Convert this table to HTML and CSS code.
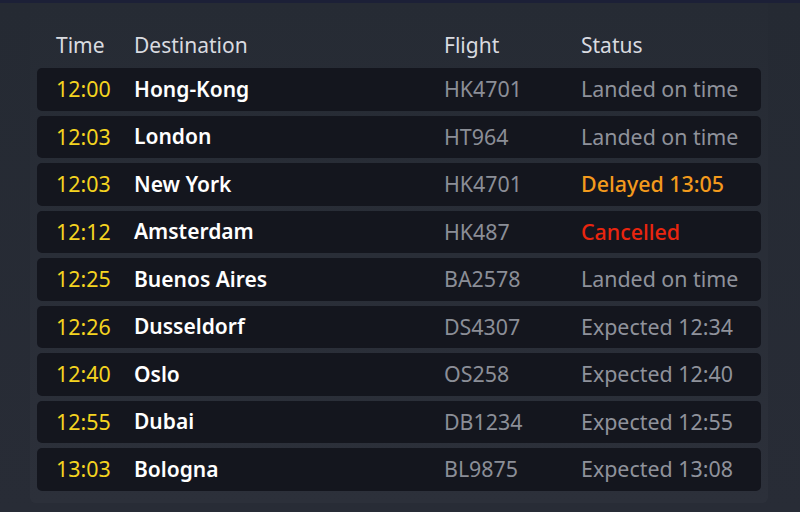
FILE: index.html
```html
<!DOCTYPE html>
<html lang="en">
<head>
    <meta charset="UTF-8">
    <meta name="viewport" content="width=device-width, initial-scale=1.0">
    <title>Departures Board</title>
    <link rel="stylesheet" href="styles.css">
</head>
<body>

<div class="board">
    <div class="head">
        <span>Time</span>
        <span>Destination</span>
        <span>Flight</span>
        <span>Status</span>
    </div>

    <div class="row">
        <span class="time">12:00</span>
        <span class="dest">Hong-Kong</span>
        <span class="flight">HK4701</span>
        <span class="status">Landed on time</span>
    </div>
    <div class="row">
        <span class="time">12:03</span>
        <span class="dest">London</span>
        <span class="flight">HT964</span>
        <span class="status">Landed on time</span>
    </div>
    <div class="row">
        <span class="time">12:03</span>
        <span class="dest">New York</span>
        <span class="flight">HK4701</span>
        <span class="status delayed">Delayed 13:05</span>
    </div>
    <div class="row">
        <span class="time">12:12</span>
        <span class="dest">Amsterdam</span>
        <span class="flight">HK487</span>
        <span class="status cancelled">Cancelled</span>
    </div>
    <div class="row">
        <span class="time">12:25</span>
        <span class="dest">Buenos Aires</span>
        <span class="flight">BA2578</span>
        <span class="status">Landed on time</span>
    </div>
    <div class="row">
        <span class="time">12:26</span>
        <span class="dest">Dusseldorf</span>
        <span class="flight">DS4307</span>
        <span class="status">Expected 12:34</span>
    </div>
    <div class="row">
        <span class="time">12:40</span>
        <span class="dest">Oslo</span>
        <span class="flight">OS258</span>
        <span class="status">Expected 12:40</span>
    </div>
    <div class="row">
        <span class="time">12:55</span>
        <span class="dest">Dubai</span>
        <span class="flight">DB1234</span>
        <span class="status">Expected 12:55</span>
    </div>
    <div class="row">
        <span class="time">13:03</span>
        <span class="dest">Bologna</span>
        <span class="flight">BL9875</span>
        <span class="status">Expected 13:08</span>
    </div>
</div>

</body>
</html>
```

FILE: styles.css
```css
/* Global styles */
* {
    margin: 0;
    padding: 0;
    box-sizing: border-box;
}

body {
    background: linear-gradient(180deg, #252a33, #282c36);
    border-top: 3px solid #1c2037;
    height: 512px;
    overflow: hidden;
    font-family: 'Noto Sans', 'Open Sans', sans-serif;
    font-size: 21.4px;
}

.board {
    margin: 0 32px 0 30px;
    padding: 23px 7px 7px 7px;
    background: linear-gradient(180deg, #262b34, #2c303a);
    border-radius: 0 0 6px 6px;
}

.head,
.row {
    display: grid;
    grid-template-columns: 78px 310px 137px 1fr;
    align-items: center;
    padding-left: 19px;
}

.head {
    height: 38px;
    font-size: 21px;
    color: #d9dbe0;
    margin-bottom: 4px;
}

.row {
    height: 42.5px;
    margin-bottom: 5px;
    padding-bottom: 1px;
    background: #14161e;
    border-radius: 5px;
}

.time {
    color: #f5d420;
}

.dest {
    color: #ffffff;
    font-size: 21px;
    font-weight: 600;
}

.flight {
    color: #8b8e97;
}

.status {
    color: #8f929b;
}

.status.delayed {
    color: #f39a1d;
    font-weight: 500;
}

.status.cancelled {
    color: #e9250f;
    font-weight: 500;
}
```
